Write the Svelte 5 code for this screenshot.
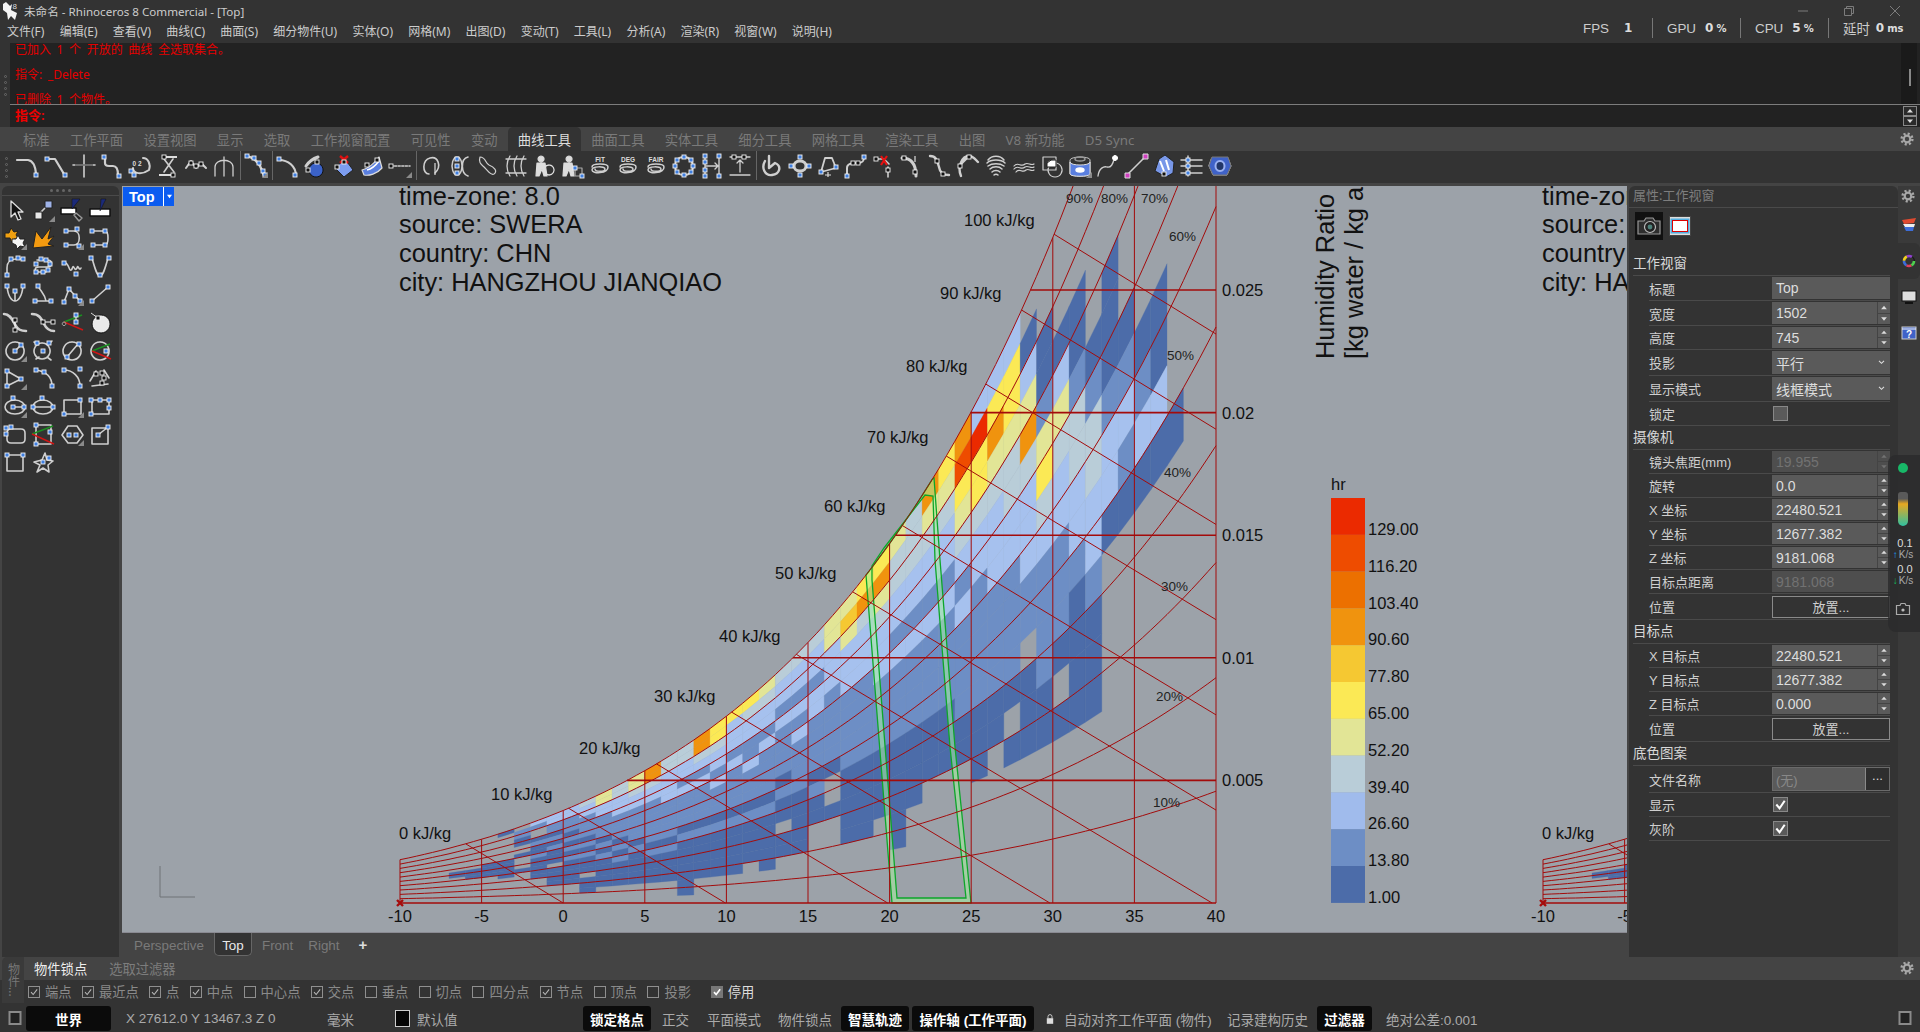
<script>
  const X = (T) => 400 + (T + 10) * 16.32;
  const Yw = (w) => 903 - w * 24520;
  const ps = (T) => 610.94 * Math.exp((17.625 * T) / (T + 243.04));
  const wOf = (T, rh) => { const p = rh * ps(T); return (0.622 * p) / (101325 - p); };
  const pt = (T, rh) => `${X(T).toFixed(1)},${Yw(wOf(T, rh)).toFixed(1)}`;

  const rhCurves = [];
  for (let r = 10; r <= 100; r += 10) {
    const p = [];
    for (let T = -10; T <= 40.01; T += 0.5) p.push(pt(T, r / 100));
    rhCurves.push(p.join(' '));
  }
  const tSatOfW = (w) => { let a = -20, b = 60; for (let i = 0; i < 40; i++) { const m = (a + b) / 2; if (wOf(m, 1) > w) b = m; else a = m; } return a; };
  const hAt = (T) => 1.006 * T + wOf(T, 1) * (2501 + 1.86 * T);
  const tSatOfH = (h) => { let a = -20, b = 60; for (let i = 0; i < 40; i++) { const m = (a + b) / 2; if (hAt(m) > h) b = m; else a = m; } return a; };

  const hLines = [];
  for (let h = 0; h <= 100; h += 10) {
    const Ts = tSatOfH(h);
    const T2 = Math.min(h / 1.006, 40);
    const w2 = T2 < 40 ? 0 : (h - 40.24) / (2501 + 74.4);
    hLines.push({ x1: X(Ts), y1: Yw(wOf(Ts, 1)), x2: X(T2), y2: Yw(w2) });
  }
  const wLines = [0.005, 0.01, 0.015, 0.02, 0.025].map((w) => ({ x1: X(tSatOfW(w)), y: Yw(w), label: String(w) }));
  const tLines = [];
  for (let T = -10; T <= 40; T += 5) tLines.push({ T, x: X(T), y: Yw(wOf(T, 1)) });

  const palette = { 0: '#4c6ca9', 1: '#6d8ec5', 2: '#a6c1ee', 3: '#b9cdd8', 4: '#e2e596', 5: '#fbe955', 6: '#f5c832', 7: '#f0930e', 8: '#ec7000', 9: '#ee4c00', a: '#eb2a00' };
  const heat = {
    '-7': '.........00', '-6': '.........000', '-5': '........0000', '-4': '0.......00000',
    '-3': '.1100..0...0', '-2': '21..0100100000', '-1': '22110101000.0000',
    0: '2211101010100000', 1: '32211110101000.000', 2: '44221111010100000', 3: '33222111101010000',
    4: '44322111110100000', 5: '77322111111010000', 6: '33222211111010000', 7: '3322121111010000000',
    8: '77321211110100000', 9: '55322121110100000', 10: '52221211110100000', 11: '5322112111010000',
    12: '43221211110100000', 13: '3221211110100.00', 14: '3221212111100000', 15: '32212211110100',
    16: '44222111110..0', 17: '4642221111100000', 18: '5732221111100000', 19: '574322211110000',
    20: '43322121111000000', 21: '333221211110000', 22: '74322121111000', 23: '54322121111000',
    24: '79543212111100', 25: '2a5532211111000', 26: '25743222111100', 27: '2554332211110.0',
    28: '.0247322211.000', 29: '..0014532111100', 30: '...0243221110.0', 31: '...001332210000',
    32: '.....0133221000', 33: '....0001220', 34: '......01210', 35: '.......0120', 36: '.......0020', 37: '..........0'
  };
  const cells = [];
  for (const key of Object.keys(heat)) {
    const T = Number(key);
    const s = heat[key];
    for (let k = 0; k < s.length; k++) {
      if (s[k] === '.') continue;
      const top = 1 - k * 0.05, bot = 1 - (k + 1) * 0.05;
      cells.push({ p: `${pt(T, top)} ${pt(T + 1, top)} ${pt(T + 1, bot)} ${pt(T, bot)}`, c: palette[s[k]] });
    }
  }
  const satPts = [];
  for (let T = 18.6; T <= 22.8; T += 0.4) satPts.push(`${X(T).toFixed(1)} ${Yw(wOf(T, 1)).toFixed(1)}`);
  const gOuter = `M892 903 L866 575 L${satPts.join(' L')} L934 478 L940 560 L955 747 L971 903 Z`;
  const gInner = 'M897 898 L872 580 L872 566 L884 548 L925 495 L933 496 L935 560 L950 747 L966 898 Z';

  const kj = [
    { t: '100 kJ/kg', x: 964, y: 220 }, { t: '90 kJ/kg', x: 940, y: 293 }, { t: '80 kJ/kg', x: 906, y: 366 },
    { t: '70 kJ/kg', x: 867, y: 437 }, { t: '60 kJ/kg', x: 824, y: 506 }, { t: '50 kJ/kg', x: 775, y: 573 },
    { t: '40 kJ/kg', x: 719, y: 636 }, { t: '30 kJ/kg', x: 654, y: 696 }, { t: '20 kJ/kg', x: 579, y: 748 },
    { t: '10 kJ/kg', x: 491, y: 794 }, { t: '0 kJ/kg', x: 399, y: 833 }
  ];
  const rhl = [
    { t: '90%', x: 1066, y: 198 }, { t: '80%', x: 1101, y: 198 }, { t: '70%', x: 1141, y: 198 }, { t: '60%', x: 1169, y: 236 },
    { t: '50%', x: 1167, y: 355 }, { t: '40%', x: 1164, y: 472 }, { t: '30%', x: 1161, y: 586 }, { t: '20%', x: 1156, y: 696 }, { t: '10%', x: 1153, y: 802 }
  ];
  const head = [
    { t: 'time-zone: 8.0', y: 205 }, { t: 'source: SWERA', y: 233 }, { t: 'country: CHN', y: 262 }, { t: 'city: HANGZHOU JIANQIAO', y: 291 }
  ];
  const legendColors = ['#eb2a00', '#ee4c00', '#ec7000', '#f0930e', '#f5c832', '#fbe955', '#e2e596', '#b9cdd8', '#a0bbec', '#6d8ec5', '#4c6ca9'];
  const legendVals = ['129.00', '116.20', '103.40', '90.60', '77.80', '65.00', '52.20', '39.40', '26.60', '13.80', '1.00'];

  const menus = ['文件(F)', '编辑(E)', '查看(V)', '曲线(C)', '曲面(S)', '细分物件(U)', '实体(O)', '网格(M)', '出图(D)', '变动(T)', '工具(L)', '分析(A)', '渲染(R)', '视窗(W)', '说明(H)'];
  const tabs = ['标准', '工作平面', '设置视图', '显示', '选取', '工作视窗配置', '可见性', '变动', '曲线工具', '曲面工具', '实体工具', '细分工具', '网格工具', '渲染工具', '出图', 'V8 新功能', 'D5 Sync'];

  const ic = (d, pts = [], o = {}) => ({ d, pts, ...o });
  const ln = (d, s = '#cfcfcf', w = 1.5, f = 'none') => ({ d, s, w, f });

  const leftIcons = [
    ic('', [], { more: [ln('M8 3V19L12 15L15 22L18 21L15 14L20 14Z', '#ddd', 1.3, '#111')] }),
    ic('M8 16L17 7', [], { fly: 1, more: [ln('M4 14h7v7H4z', '#222', 1, '#e8e8e8'), ln('M14 3h7v7h-7z', '#222', 1, '#9fb3e8')] }),
    ic('', [], { more: [ln('M1 10h15v6H1z', '#111', 1.5, '#fff'), ln('M12 11L20 1H12Z', '#111', .5, '#1b2a7a'), ln('M16 15L22 20L19 23L14 17Z', '#999', 1.5, '#222')] }),
    ic('', [], { more: [ln('M2 11h20v7H2z', '#111', 1.5, '#fff'), ln('M12 13L18 1H13Z', '#111', .5, '#1b2a7a')] }),
    ic('', [], { fly: 1, more: [ln('M2 7L6 7L8 2L11 6L15 5L13 9L16 13L11 13L9 17L7 12L2 12Z', '#222', 1, '#f0a010'), ln('M9 13L13 13L15 9L17 13L22 13L20 17L22 21L17 20L14 23L13 19L9 17Z', '#222', 1, '#f4f4f4')] }),
    ic('', [], { more: [ln('M2 22L5 5L11 13L20 1L17 13L23 10L17 18L23 20Z', '#222', 1, '#f39a10')] }),
    ic('M6 5H14C21 5 21 19 14 19H6', [[6, 5], [17, 3], [6, 19], [19, 20]], { fly: 1 }),
    ic('M6 5H17C21 5 21 19 17 19H6', [[4, 5], [17, 5], [5, 19], [17, 19]]),
    ic('M4 21V14C4 6 9 5 14 5H20', [[4, 21], [8, 5], [15, 4], [20, 5]]),
    ic('M6 6H16C22 6 22 13 16 13H8C3 13 3 18 8 18H15', [[5, 10], [5, 18], [10, 5], [15, 6], [19, 10], [12, 18], [17, 16]]),
    ic('M5 9C9 8 9 20 12 15C14 8 14 19 17 14C18 9 19 18 21 14', [[4, 9], [16, 20]]),
    ic('M4 4C7 15 9 22 12 22C15 22 17 15 20 4', [[3, 4], [21, 4], [12, 21]]),
    ic('M4 4C5 15 9 19 12 19C15 19 19 15 20 4 M12 8V19', [[4, 4], [20, 4], [12, 9]]),
    ic('M7 4C10 10 14 12 15 19H4H20', [[7, 4], [4, 19], [20, 19]]),
    ic('M4 20L9 7L20 19', [[4, 20], [9, 7], [15, 14], [20, 19]], { fly: 1 }),
    ic('M4 19L20 5', [[4, 19], [20, 5]]),
    ic('M1 4C8 4 10 12 13 16C15 20 18 21 23 21', [], { w: 2.6, blk: 1, pts: [[12, 10], [12, 20]], more: [ln('M12 10V20', '#fff', 1)] }),
    ic('M1 4C8 4 10 8 13 14C15 18 18 21 23 21', [], { w: 2.6, blk: 1, pts: [[12, 12], [22, 12]], more: [ln('M12 12H22', '#fff', 1)] }),
    ic('M3 12', [[16, 5], [16, 12]], { more: [ln('M4 12L22 5', '#1a9020', 1.6), ln('M4 12L23 20', '#d01515', 1.6), ln('M16 4V14', '#fff', 1), ln('M4 12a1.8 1.8 0 1 0 .1 0', '#aaa', 1)] }),
    ic('', [[3, 3]], { blk: 1, pts: [[10, 8]], more: [ln('M13 5a9 9 0 1 0 .1 0', '#111', 1, '#e9e9e9'), ln('M3 3L10 8', '#ddd', 1)] }),
    ic('M12 4a9 9 0 1 0 .1 0M12 13L18 7', [[12, 13], [18, 7]], { fly: 1 }),
    ic('M11 5a8 8 0 1 0 .1 0M3 4L7 7M21 3L17 7M5 21L8 19M20 22L16 19', [[12, 13], [6, 5], [18, 5]]),
    ic('M12 4a9 9 0 1 0 .1 0M7 19L18 6', [[7, 19], [19, 6]]),
    ic('M12 4a9 9 0 1 0 .1 0', [[18, 13]], { more: [ln('M4 13L22 6', '#1a9020', 1.5), ln('M4 13L23 21', '#d01515', 1.5)] }),
    ic('M4 5V20L18 13Z', [[4, 5], [18, 13], [4, 20]], { fly: 1 }),
    ic('M5 4C11 5 21 8 21 20', [[5, 4], [13, 6], [21, 20]]),
    ic('M4 4C13 4 20 11 20 20', [[4, 4], [20, 3], [20, 20]]),
    ic('M2 15L8 5M16 4L21 12M4 20L20 18', [], { blk: 1, pts: [[8, 8], [14, 7], [16, 12], [14, 17]] }),
    ic('M12 6C5 6 2 10 2 13C2 17 6 20 12 20C18 20 22 17 22 13C22 10 18 6 12 6ZM10 13H21', [[10, 4], [10, 13], [21, 13]], { fly: 1 }),
    ic('M12 6C5 6 2 10 2 13C2 17 6 20 12 20C18 20 22 17 22 13C22 10 18 6 12 6ZM2 13H22', [[11, 4], [2, 13], [22, 13]]),
    ic('M4 6H21V20H4Z', [[20, 6], [4, 20]], { fly: 1 }),
    ic('M4 6H21V20H4Z', [[3, 6], [12, 6], [21, 6], [3, 20], [21, 14]]),
    ic('M8 7H18Q22 7 22 11V17Q22 21 18 21H8Q4 21 4 17V11Q4 7 8 7Z', [[3, 6], [8, 5], [3, 12]]),
    ic('M5 3H20V22H5Z', [[5, 3], [19, 10], [5, 22]], { more: [ln('M1 12L22 4', '#1a9020', 1.4), ln('M1 12L23 22', '#d01515', 1.4)] }),
    ic('M8 4H17L23 13L17 21H8L2 13Z', [[9, 13], [16, 13]], { fly: 1 }),
    ic('M4 6H20V22H4ZM10 13L20 5', [[10, 13], [20, 5]]),
    ic('M4 5H20V21H4Z', [[4, 5], [20, 5]]),
    ic('M3 12L11 10L14 3L16 10L22 11L17 15L18 22L12 18L6 22L9 15Z', [[12, 12], [18, 8]])
  ];

  const topGroups = [
    [
      ic('M1 6H12Q19 7 20 20', [[20, 21]], { w: 2.2 }),
      ic('M2 5H11L20 20', [[3, 5], [21, 21]], { w: 2.2 }),
      ic('M1 11H23M12 1V23', [], { more: [ln('M3 11H21', '#333', 1, 'none')] }),
      ic('M5 3V9Q5 12 9 12H13Q18 12 18 21', [[4, 3], [19, 22]], { w: 2.2 }),
      ic('M5 14C5 20 14 21 21 16C23 10 20 4 15 4', [[3, 17], [6, 21]], { txt: '0 2', w: 2 }),
      ic('M8 5L18 18M17 5L8 18', [], { more: [ln('M9 3h12', '#ddd', 2), ln('M3 21h12', '#ddd', 2)], blk: 1, pts: [[8, 3], [17, 21]] }),
      ic('M2 14L7 7L12 14L17 9L22 14', [], { w: 2, blk: 1, pts: [[7, 9], [12, 12], [17, 10]] }),
      ic('M3 22V13C3 4 21 4 21 13V22M12 3V22', [], { w: 1.3 })
    ],
    [ic('M3 2C12 4 17 11 20 22', [[3, 2], [10, 4], [15, 9], [19, 17], [21, 21]], { w: 2.4, fly: 1 })],
    [
      ic('M3 6C12 6 20 12 20 22', [[3, 5], [19, 21]], { w: 2.2 }),
      ic('M2 12C6 6 11 4 14 3', [], { w: 3, blk: 1, pts: [[4, 16], [13, 8]], more: [ln('M12 9a7 7 0 1 0 .1 0', '#111', 1, '#3b62c8')] }),
      ic('', [], { more: [ln('M3 14L13 5L21 16L12 23Z', '#222', 1, '#7d9df0'), ln('M6 3H17', '#111', 0, 'none'), ln('M8 2L16 9M16 2L8 9', '#e01010', 2.4)], blk: 1, pts: [[5, 13], [12, 8]] }),
      ic('', [], { more: [ln('M2 16C9 14 14 10 19 3L22 14C17 20 9 22 4 21Z', '#ddd', 1.2, '#5a7fe0'), ln('M7 16C12 15 16 11 19 7', '#fff', 1.6)], blk: 1, pts: [[7, 11], [17, 6]] }),
      ic('M3 12H22', [[4, 12]], { dash: 1, fly: 1, blk: 1, pts: [[3, 12]] })
    ],
    [
      ic('M9 20C2 20 2 6 10 4C18 2 22 12 15 19', [[12, 8], [12, 18]], { more: [ln('M15 9V21', '#ddd', 1.2)], blk: 1, pts: [] }),
      ic('M20 3C12 5 13 20 20 22', [[9, 5], [9, 12], [9, 19]], { more: [ln('M9 3a5 9 0 1 0 .1 0', '#ccc', 1.5)] }),
      ic('M4 3C10 3 9 9 13 11C18 13 22 17 18 20C15 22 12 17 9 14C6 11 2 9 4 3Z', [], { w: 1.2 }),
      ic('M2 5H22M2 19H22M6 2C2 8 2 16 6 22M13 2C9 8 9 16 13 22M20 2C16 8 16 16 20 22', [], { w: 1.3 }),
      ic('', [], { txt2: 'man', more: [ln('M9 2a3 3 0 1 0 .1 0M5 9H13L15 22H12L10 15L7 22H4Z', '#ddd', 1.2, '#ddd'), ln('M17 11a5 5 0 1 0 .1 0', '#ddd', 1.3)] }),
      ic('', [], { more: [ln('M9 2a3 3 0 1 0 .1 0M4 9H12L14 22H11L9 15L6 22H3Z', '#ddd', 1.2, '#ddd'), ln('M15 14h7v8h-7z', '#aaa', 1.2)], pts: [[15, 14], [22, 22]] }),
      ic('M4 13C4 9 20 9 20 13C20 20 4 20 4 16C4 12 17 12 17 15C17 18 7 18 7 15', [], { label: 'FIT', w: 1.5 }),
      ic('M4 13C4 9 20 9 20 13C20 20 4 20 4 16C4 12 17 12 17 15C17 18 7 18 7 15', [], { label: 'DEG', w: 1.5 }),
      ic('M4 13C4 9 20 9 20 13C20 20 4 20 4 16C4 12 17 12 17 15C17 18 7 18 7 15', [], { label: 'FAIR', w: 1.5 }),
      ic('M12 3C18 3 21 8 21 12C21 18 17 21 12 21C6 21 3 17 3 12C3 7 6 3 12 3Z', [[12, 3], [19, 6], [21, 12], [19, 18], [12, 21], [5, 18], [3, 12], [5, 6]], { w: 2 }),
      ic('M5 2V22M19 2V22M5 12H18M15 9L18 12L15 15', [[5, 2], [5, 8], [5, 16], [5, 22], [19, 2], [19, 22]], { w: 1.4 }),
      ic('M2 3H22M12 6V18M9 9L12 6L15 9M2 21H22', [[6, 3], [16, 3]], { w: 1.3, blk: 1 })
    ],
    [
      ic('M5 7C1 14 5 22 12 21C20 20 22 12 15 9L9 14L9 2', [], { w: 2.4 }),
      ic('M12 7C20 7 20 17 12 17C4 17 4 7 12 7Z', [[12, 3], [21, 12], [12, 21], [3, 12]], { w: 3 }),
      ic('M5 18L9 4H16L20 14Z', [[5, 18], [20, 13]], { w: 1.8, more: [ln('M12 18V23M9 21H15', '#ddd', 1.2)] }),
      ic('M3 22V14C3 10 8 9 11 9H14C18 9 20 8 20 3', [[3, 22], [20, 3]], { w: 2, blk2: [[9, 9], [14, 9]] }),
      ic('M3 5H12L17 10M16 13V23', [], { blk: 1, pts: [[4, 5], [16, 16]], more: [ln('M9 2L15 11M15 2L9 11', '#e81010', 2.2)] }),
      ic('M2 4C10 4 16 8 16 22', [], { w: 3, blk: 1, pts: [[4, 4], [15, 18]], more: [ln('M15 2V8', '#ddd', 1.2)] }),
      ic('M2 2C8 2 9 6 11 13C12 19 15 21 21 21', [], { w: 2.4, blk: 1, pts: [[9, 7], [15, 20]] }),
      ic('M5 22C1 13 6 2 13 2C17 2 19 5 22 8M4 11L10 5', [], { w: 2.4, blk: 1, pts: [[4, 12], [13, 3]] }),
      ic('M4 6C8 1 16 1 20 6M3 9C7 5 17 5 21 9M4 12C8 9 16 9 20 12M6 15C9 12 15 12 18 15M8 18C10 16 14 16 16 18M10 21C11 20 13 20 14 21', [], { w: 1.5 }),
      ic('M2 12C6 7 9 14 13 10C16 8 19 12 22 10M2 15C6 10 9 17 13 13C16 11 19 15 22 13M4 18C8 13 10 20 14 16C17 14 19 18 22 16', [], { w: 1.2 }),
      ic('M3 3H16V16H3ZM15 9a7 7 0 1 0 .1 0', [], { w: 1.2, more: [ln('M7 9a9 9 0 0 1 9 -3V13H7Z', '#222', 1, '#fff')] }),
      ic('M2 6C2 2 22 2 22 6V20C22 23 2 23 2 20Z', [], { w: 1, fly: 1, more: [ln('M2 8C2 12 22 12 22 8V20C22 23 2 23 2 20Z', '#ddd', 1, '#5a7fe0'), ln('M8 16a4 2 0 1 0 8 0a4 2 0 1 0 -8 0', '#fff', 1.4, '#fff'), ln('M7 5a5 2 0 1 0 10 0a5 2 0 1 0 -10 0', '#999', 1.5)] }),
      ic('M2 22C3 14 8 12 11 13C15 14 17 10 18 5', [], { w: 1.3, more: [ln('M19 1.5a2.5 2.5 0 1 0 .1 0', '#fff', 1, '#fff')] }),
      ic('M3 21L21 3', [], { w: 1.6, more: [ln('M1 19h5v5H1zM19 0h5v5h-5z', '#ddd', 1, '#d040c0')] }),
      ic('', [], { more: [ln('M7 5L13 1L22 8L21 19L14 23L3 17Z', '#222', 1, '#7897e8'), ln('M8 7L12 17M14 6L17 16', '#fff', 2)], blk: 1, pts: [[12, 20]] }),
      ic('M1 6H22M1 12H22M1 19H22M8 2V22', [[8, 6], [8, 12], [8, 19]], { w: 1.5 }),
      ic('M4 4H20L23 12L19 21H5L1 12Z', [], { w: 1, more: [ln('M4 3H20L23 12L19 21H5L1 12Z', '#777', 1, '#3f62c8'), ln('M12 7C18 7 18 17 12 17C6 17 6 7 12 7Z', '#9ab0f0', 2, '#223668')] })
    ]
  ];

  const rows = [
    { t: 'sec', l: '工作视窗' },
    { t: 'text', l: '标题', v: 'Top', h: 25 },
    { t: 'spin', l: '宽度', v: '1502', h: 25 },
    { t: 'spin', l: '高度', v: '745' },
    { t: 'sel', l: '投影', v: '平行', h: 26 },
    { t: 'sel', l: '显示模式', v: '线框模式', h: 26 },
    { t: 'chk', l: '锁定', v: false },
    { t: 'sec', l: '摄像机' },
    { t: 'spin', l: '镜头焦距(mm)', v: '19.955', off: 1 },
    { t: 'spin', l: '旋转', v: '0.0' },
    { t: 'spin', l: 'X 坐标', v: '22480.521' },
    { t: 'spin', l: 'Y 坐标', v: '12677.382' },
    { t: 'spin', l: 'Z 坐标', v: '9181.068' },
    { t: 'text', l: '目标点距离', v: '9181.068', off: 1 },
    { t: 'btn', l: '位置', v: '放置...', h: 26 },
    { t: 'sec', l: '目标点' },
    { t: 'spin', l: 'X 目标点', v: '22480.521' },
    { t: 'spin', l: 'Y 目标点', v: '12677.382' },
    { t: 'spin', l: 'Z 目标点', v: '0.000' },
    { t: 'btn', l: '位置', v: '放置...', h: 26 },
    { t: 'sec', l: '底色图案' },
    { t: 'file', l: '文件名称', v: '(无)', h: 27 },
    { t: 'chk', l: '显示', v: true },
    { t: 'chk', l: '灰阶', v: true }
  ];

  const osnaps = [['端点', 1], ['最近点', 1], ['点', 1], ['中点', 1], ['中心点', 0], ['交点', 1], ['垂点', 0], ['切点', 0], ['四分点', 0], ['节点', 1], ['顶点', 0], ['投影', 0]];

  const status = [
    { x: 26, w: 85, t: '世界', p: 1 },
    { x: 126, t: 'X 27612.0 Y 13467.3 Z 0' },
    { x: 327, t: '毫米' },
    { x: 395, sw: 1 },
    { x: 417, t: '默认值' },
    { x: 583, w: 68, t: '锁定格点', p: 1 },
    { x: 662, t: '正交' },
    { x: 707, t: '平面模式' },
    { x: 778, t: '物件锁点' },
    { x: 841, w: 68, t: '智慧轨迹', p: 1 },
    { x: 912, w: 122, t: '操作轴 (工作平面)', p: 1 },
    { x: 1046, lock: 1 },
    { x: 1064, t: '自动对齐工作平面 (物件)' },
    { x: 1227, t: '记录建构历史' },
    { x: 1317, w: 55, t: '过滤器', p: 1 },
    { x: 1386, t: '绝对公差:0.001' },
    { x: 1880 }
  ];
</script>

{#snippet gear()}
  <svg class="gear" viewBox="0 0 14 14">
    <circle cx="7" cy="7" r="5.4" fill="none" stroke="#a8a8a8" stroke-width="2.4" stroke-dasharray="2.1 2.14" />
    <circle cx="7" cy="7" r="3.3" fill="none" stroke="#a8a8a8" stroke-width="2.2" />
  </svg>
{/snippet}

{#snippet icon(i)}
  <svg class="ic" viewBox="0 0 24 24">
    {#if i.d}
      <path d={i.d} fill="none" stroke="#cfcfcf" stroke-width={i.w || 1.6} stroke-linecap="round" stroke-linejoin="round" stroke-dasharray={i.dash ? '2 1.6' : null} />
    {/if}
    {#each i.more || [] as m}
      <path d={m.d} fill={m.f} stroke={m.s} stroke-width={m.w} stroke-linejoin="round" />
    {/each}
    {#if i.label}<text class="ictxt" x="12" y="7.5">{i.label}</text>{/if}
    {#if i.txt}<text class="ictxt" x="9" y="12">{i.txt}</text>{/if}
    {#each i.pts as p}
      <rect x={p[0] - 2} y={p[1] - 2} width="4" height="4" fill={i.blk ? '#111' : '#3f7fe0'} stroke="#f2f2f2" stroke-width="0.9" />
    {/each}
    {#each i.blk2 || [] as p}
      <rect x={p[0] - 2} y={p[1] - 2} width="4" height="4" fill="#111" stroke="#f2f2f2" stroke-width="0.9" />
    {/each}
    {#if i.fly}<path d="M24 18V24H18Z" fill="#8a8a8a" />{/if}
  </svg>
{/snippet}

{#snippet check(on, strong)}
  <span class="cb" class:strong>
    {#if on}<svg viewBox="0 0 12 12"><path d="M2.4 6.2L5 9L9.8 2.8" fill="none" stroke={strong ? '#fff' : '#b8b8b8'} stroke-width={strong ? 2 : 1.3} /></svg>{/if}
  </span>
{/snippet}

<div class="app">
  <header class="top">
    <div class="title">
      <svg class="logo" viewBox="0 0 18 20">
        <path d="M1 3L4 1L8 5L10 3L9 9L15 12L13 19L9 15L6 19L5 12L1 9Z" fill="#f4f4f4" />
        <text x="10.5" y="8" class="logo8">8</text>
      </svg>
      <span>未命名 - Rhinoceros 8 Commercial - [Top]</span>
    </div>
    <nav class="menu">
      {#each menus as m}<span>{m}</span>{/each}
    </nav>
    <div class="stats">
      <div class="winbtns">
        <svg viewBox="0 0 10 10"><path d="M0 5H10" stroke="#7c7c7c" fill="none" /></svg>
        <svg viewBox="0 0 10 10"><path d="M0.5 2.5H7.5V9.5H0.5ZM2.5 2.5V0.5H9.5V7.5H7.5" stroke="#7c7c7c" fill="none" /></svg>
        <svg viewBox="0 0 10 10"><path d="M0 0L10 10M10 0L0 10" stroke="#7c7c7c" fill="none" /></svg>
      </div>
      <div class="nums">
        <span class="st w-fps">FPS<b>1</b></span>
        <span class="st">GPU<b>0<small>%</small></b></span>
        <span class="st">CPU<b>5<small>%</small></b></span>
        <span class="st last">延时<b>0<small>ms</small></b></span>
      </div>
    </div>
  </header>

  <section class="cmd">
    <div class="grip"><i></i><i></i><i></i><i></i></div>
    <div class="cmdbody">
      <div class="hist">
        <p>已加入 1 个 开放的 曲线 全选取集合。</p>
        <p>指令: _Delete</p>
        <p>已删除 1 个物件。</p>
        <div class="sbar"><i></i></div>
      </div>
      <div class="prompt">
        <span>指令:</span>
        <div class="arrows">
          <svg viewBox="0 0 14 10"><rect x=".5" y=".5" width="13" height="9" fill="#2a2a2a" stroke="#888" /><path d="M4 6.5L7 3L10 6.5Z" fill="#ddd" /></svg>
          <svg viewBox="0 0 14 10"><rect x=".5" y=".5" width="13" height="9" fill="#2a2a2a" stroke="#888" /><path d="M4 3.5L7 7L10 3.5Z" fill="#ddd" /></svg>
        </div>
      </div>
    </div>
  </section>

  <div class="tabbar">
    {#each tabs as t}<span class:act={t === '曲线工具'}>{t}</span>{/each}
    <div class="tabgear">{@render gear()}</div>
  </div>

  <div class="iconbar">
    <div class="grip small"><i></i><i></i><i></i><i></i></div>
    {#each topGroups as g, gi}
      {#if gi > 0}<span class="sep"></span>{/if}
      {#each g as i}<span class="cell">{@render icon(i)}</span>{/each}
    {/each}
  </div>

  <main class="main">
    <aside class="left">
      <div class="lefthead"><i></i><i></i><i></i><i></i></div>
      <div class="leftgrid">
        {#each leftIcons as i}<span class="lcell">{@render icon(i)}</span>{/each}
      </div>
    </aside>

    <div class="center">
      <div class="vp">
        <svg class="chart" viewBox="122 186 1505 747">
          {#each [0, 1143] as dx}
            <g transform="translate({dx} 0)">
              {#each head as h}<text class="h1" x="399" y={h.y}>{h.t}</text>{/each}
              {#each cells as c}<polygon points={c.p} fill={c.c} stroke={c.c} stroke-width="0.3" />{/each}
              <path d={gOuter + ' ' + gInner} fill="#a8f0a0" fill-opacity="0.55" fill-rule="evenodd" />
              <path d={gOuter} fill="none" stroke="#0da62a" stroke-width="1.3" />
              <path d={gInner} fill="none" stroke="#0da62a" stroke-width="1.3" />
              {#each rhCurves as c}<polyline points={c} class="red" />{/each}
              {#each hLines as l}<line x1={l.x1} y1={l.y1} x2={l.x2} y2={l.y2} class="red" />{/each}
              {#each wLines as l}
                <line x1={l.x1} y1={l.y} x2="1216" y2={l.y} class="red thick" />
                <text class="ax" x="1222" y={l.y + 6}>{l.label}</text>
              {/each}
              {#each tLines as l}
                <line x1={l.x} y1="903" x2={l.x} y2={l.y} class="red" />
                <text class="ax mid" x={l.x} y="922">{l.T}</text>
              {/each}
              <line x1="400" y1="903" x2="1216" y2="903" class="red thick" />
              {#each kj as k}<text class="ax" x={k.x} y={k.y + 6}>{k.t}</text>{/each}
              {#each rhl as r}<text class="pc" x={r.x} y={r.y + 5}>{r.t}</text>{/each}
              <path d="M397 900L403 906M403 900L397 906" stroke="#a50c0c" stroke-width="2.4" />
              <text class="h1" transform="translate(1334 359) rotate(-90)">Humidity Ratio</text>
              <text class="h1" transform="translate(1363 359) rotate(-90)">[kg water / kg air]</text>
              <text class="ax" x="1331" y="490">hr</text>
              {#each legendColors as c, n}
                <rect x="1331" y={498 + n * 36.8} width="34" height="36.9" fill={c} />
                <text class="ax" x="1368" y={535 + n * 36.8}>{legendVals[n]}</text>
              {/each}
            </g>
          {/each}
          <path d="M160 866V897H195" fill="none" stroke="#6e7276" stroke-width="1" />
        </svg>
        <div class="vptag"><span>Top</span><em><svg viewBox="0 0 8 6"><path d="M1 1H7L4 5Z" fill="#fff" /></svg></em></div>
      </div>
      <div class="vptabs">
        <span>Perspective</span><span class="on">Top</span><span>Front</span><span>Right</span><b>+</b>
      </div>
    </div>

    <aside class="props">
      <div class="phead">
        <span>属性:工作视窗</span>
      </div>
      <div class="pwrap">
        <div class="pbody">
          <div class="picons">
            <span class="cam">
              <svg viewBox="0 0 28 28">
                <path d="M3 9H9L11 6H18L20 9H25V22H3Z" fill="#2e2e2e" stroke="#999" stroke-width="1.2" />
                <circle cx="15" cy="15" r="5.5" fill="#222" stroke="#bbb" stroke-width="1.2" />
                <circle cx="15" cy="15" r="2.4" fill="#4c7f78" />
              </svg>
            </span>
            <span class="rectbtn"><i></i></span>
          </div>
          {#each rows as r}
            {#if r.t === 'sec'}
              <div class="sec">{r.l}</div>
            {:else}
              <div class="row h{r.h || 24}">
                <span class="lab">{r.l}</span>
                {#if r.t === 'text'}
                  <div class="fld" class:off={r.off}><span>{r.v}</span></div>
                {:else if r.t === 'spin'}
                  <div class="fld" class:off={r.off}><span>{r.v}</span>
                    <div class="spin">
                      <svg viewBox="0 0 12 11"><path d="M3 7.5L6 4L9 7.5Z" /></svg>
                      <svg viewBox="0 0 12 11"><path d="M3 3.5L6 7L9 3.5Z" /></svg>
                    </div>
                  </div>
                {:else if r.t === 'sel'}
                  <div class="fld"><span>{r.v}</span>
                    <svg class="chev" viewBox="0 0 8 6"><path d="M1 1L4 4L7 1" fill="none" stroke="#ddd" stroke-width="1.3" /></svg>
                  </div>
                {:else if r.t === 'chk'}
                  <div class="chkwrap"><span class="pcb">{#if r.v}<svg viewBox="0 0 14 14"><path d="M2.5 7L6 11L11.5 3" fill="none" stroke="#fff" stroke-width="2.2" /></svg>{/if}</span></div>
                {:else if r.t === 'btn'}
                  <div class="btn">{r.v}</div>
                {:else if r.t === 'file'}
                  <div class="filef"><span>{r.v}</span><em>...</em></div>
                {/if}
              </div>
            {/if}
          {/each}
        </div>
      </div>
    </aside>

    <div class="strip">
      <div class="stripgear">{@render gear()}</div>
      <div class="stab">
        <svg viewBox="0 0 16 16"><path d="M1 3L15 1L13 6L3 7Z" fill="#e04a30" /><path d="M2 7L14 7L13 10L4 10Z" fill="#eee" /><path d="M3 10L13 10L12 14L5 14Z" fill="#3d6dd8" /></svg>
      </div>
      <div class="stab act">
        <svg viewBox="0 0 16 16"><circle cx="8" cy="8" r="5.4" fill="none" stroke="#111" stroke-width="1" /><circle cx="8" cy="8" r="5" fill="none" stroke="#4fd04f" stroke-width="2.6" stroke-dasharray="5.2 26" /><circle cx="8" cy="8" r="5" fill="none" stroke="#e04060" stroke-width="2.6" stroke-dasharray="0 5.2 5.2 26" /><circle cx="8" cy="8" r="5" fill="none" stroke="#3d6dd8" stroke-width="2.6" stroke-dasharray="0 10.4 5.2 26" /><circle cx="8" cy="8" r="5" fill="none" stroke="#f0d020" stroke-width="2.6" stroke-dasharray="0 15.6 5.2 26" /><circle cx="8" cy="8" r="5" fill="none" stroke="#9040d0" stroke-width="2.6" stroke-dasharray="0 20.8 5.2 26" /></svg>
      </div>
      <div class="stab">
        <svg viewBox="0 0 16 16"><rect x="1" y="2" width="14" height="10" fill="#ddd" stroke="#111" /><path d="M4 14H12" stroke="#111" stroke-width="2" /></svg>
      </div>
      <div class="stab">
        <svg viewBox="0 0 16 16"><rect x="1" y="2" width="14" height="12" fill="#3f62c8" stroke="#ccc" /><path d="M1 4H15" stroke="#fff" /><text x="8" y="12.5" class="q">?</text></svg>
      </div>
    </div>

    <div class="hud">
      <i class="dot"></i>
      <i class="gauge"></i>
      <div class="sp">0.1</div>
      <div class="ks"><em class="blue">↑</em>K/s</div>
      <div class="sp">0.0</div>
      <div class="ks"><em class="green">↓</em>K/s</div>
      <svg viewBox="0 0 16 14"><path d="M1.5 3.5H5L6 1.5H10L11 3.5H14.5V12.5H1.5Z" fill="none" stroke="#aaa" stroke-width="1.2" /><circle cx="8" cy="8" r="1.6" fill="#bbb" /></svg>
    </div>
  </main>

  <div class="sn-tabs">
    <div class="vtab">物件...</div>
    <span class="on">物件锁点</span><span>选取过滤器</span>
    <div class="sngear">{@render gear()}</div>
  </div>
  <div class="sn-row">
    {#each osnaps as o}
      <span class="sn">{@render check(o[1], false)}{o[0]}</span>
    {/each}
    <span class="sn stop">{@render check(true, true)}停用</span>
  </div>
  <footer class="status">
    <svg class="sqi" viewBox="0 0 14 14"><rect x="1.5" y="1" width="11" height="12" fill="#222" stroke="#8a8a8a" stroke-width="2" /></svg>
    {#each status.slice(0, -1) as s, n}
      <div class="scell" style="width:{status[n + 1].x - s.x}px">
        {#if s.p}<span class="pill" style="width:{s.w}px">{s.t}</span>
        {:else if s.sw}<span class="swatch"></span>
        {:else if s.lock}<svg class="lk" viewBox="0 0 10 14"><path d="M2.5 6V4a2.5 2.5 0 0 1 5 0V6" fill="none" stroke="#ccc" stroke-width="1.2" /><rect x="1" y="6" width="8" height="7" fill="#ddd" /></svg>
        {:else}{s.t}{/if}
      </div>
    {/each}
    <svg class="sqi end" viewBox="0 0 14 14"><rect x="1.5" y="1" width="11" height="12" fill="#222" stroke="#8a8a8a" stroke-width="2" /></svg>
  </footer>
</div>

<style>
  :global(body) { margin: 0; background: #333; }
  .app { width: 1920px; height: 1032px; display: flex; flex-direction: column; overflow: hidden; background: #444; position: relative; font-family: "Noto Sans", "Noto Sans CJK SC", sans-serif; font-size: 12px; color: #ccc; }
  .top { height: 43px; background: #333; position: relative; flex: none; }
  .title { height: 22px; display: flex; align-items: center; gap: 4px; padding-left: 2px; font-size: 11.6px; }
  .logo { width: 18px; height: 20px; }
  .logo8 { font: 8px "Liberation Sans", sans-serif; fill: #ddd; }
  .menu { display: flex; gap: 15.2px; padding-left: 7px; height: 18px; align-items: center; }
  .stats { position: absolute; right: 0; top: 0; width: 340px; height: 43px; }
  .winbtns { position: absolute; top: 6px; left: 218px; display: flex; gap: 36px; }
  .winbtns svg { width: 10px; height: 10px; }
  .nums { position: absolute; top: 18px; left: 3px; height: 20px; display: flex; font-size: 13.4px; color: #ccc; }
  .st { display: flex; align-items: center; gap: 9px; width: 88px; padding-left: 14px; box-sizing: border-box; border-right: 1px solid #777; height: 20px; white-space: nowrap; font-family: "Liberation Sans", "Noto Sans CJK SC", sans-serif; }
  .st.last { border: none; gap: 6px; width: 78px; }
  .st.w-fps { width: 70px; padding-left: 0; gap: 15px; }
  .st b { font-family: "DejaVu Sans", sans-serif; font-size: 12px; color: #ddd; }
  .st small { font-size: 10px; margin-left: 3px; }

  .cmd { height: 84px; flex: none; display: flex; background: #333; }
  .grip { width: 10px; flex: none; display: flex; flex-direction: column; align-items: center; justify-content: center; gap: 3px; }
  .grip i { width: 3px; height: 3px; border: 1px solid #6a6a6a; border-radius: 50%; box-sizing: border-box; }
  .cmdbody { flex: 1; background: #222; display: flex; flex-direction: column; }
  .hist { height: 61px; border-bottom: 1px solid #7d7d7d; position: relative; overflow: hidden; padding-left: 5px; color: #e40000; }
  .hist p { margin: 0; height: 25px; line-height: 25px; font-size: 12px; word-spacing: 2.5px; position: relative; top: -6px; }
  .sbar { position: absolute; right: 3px; top: 0; bottom: 0; width: 16px; background: #1a1a1a; }
  .sbar i { position: absolute; left: 8px; top: 26px; width: 2px; height: 17px; background: #888; }
  .prompt { flex: 1; display: flex; justify-content: space-between; padding: 0 3px 0 5px; align-items: center; color: #ee0000; font-size: 13px; font-weight: 600; }
  .prompt span { position: relative; top: -2px; }
  .arrows { display: flex; flex-direction: column; width: 14px; }
  .arrows svg { width: 14px; height: 10px; display: block; }

  .tabbar { height: 24px; flex: none; background: #444; display: flex; align-items: flex-end; gap: 20.3px; padding-left: 23px; color: #7a7a7a; font-size: 13.3px; position: relative; }
  .tabbar span { height: 24px; line-height: 26px; }
  .tabbar span.act { background: #333; color: #ddd; padding: 0 10px; margin: 0 -10px; border-radius: 5px 5px 0 0; }
  .tabgear { position: absolute; right: 6px; top: 5px; }
  .gear { width: 14px; height: 14px; display: block; }

  .iconbar { height: 32px; flex: none; background: #333; display: flex; align-items: center; position: relative; padding: 0 0 3px 14px; box-sizing: border-box; }
  .grip.small { position: absolute; left: 1px; top: 2px; width: 10px; height: 28px; }
  .cell { width: 28px; height: 29px; display: flex; align-items: center; justify-content: center; flex: none; }
  .ic { width: 24px; height: 24px; display: block; overflow: visible; }
  .ictxt { font: bold 6.5px "Liberation Sans Narrow", "Liberation Sans", sans-serif; fill: #ddd; text-anchor: middle; }
  .sep { width: 1px; height: 29px; background: #666; margin: 0 1px 0 2px; flex: none; }

  .main { flex: 1; min-height: 0; display: flex; padding-top: 3px; background: #444; position: relative; }
  .left { width: 117px; margin: 0 3px 0 2px; flex: none; background: #333; border-radius: 6px 6px 0 0; }
  .lefthead { height: 9px; border-bottom: 1px solid #4a4a4a; display: flex; justify-content: center; gap: 3px; align-items: center; }
  .lefthead i { width: 3px; height: 3px; background: #666; border-radius: 50%; }
  .leftgrid { display: grid; grid-template-columns: repeat(4, 28.3px); grid-auto-rows: 28px; justify-items: center; align-items: center; margin-left: -1px; }
  .lcell { width: 24px; height: 24px; display: block; }

  .center { width: 1505px; flex: none; display: flex; flex-direction: column; }
  .vp { height: 747px; background: #9ca2a9; position: relative; overflow: hidden; flex: none; border-bottom: 1px solid #8a8a92; box-sizing: border-box; }
  .chart { width: 1505px; height: 747px; display: block; }
  .h1 { font: 25.4px "Liberation Sans", sans-serif; fill: #111; }
  .ax { font: 16.5px "Liberation Sans", sans-serif; fill: #111; }
  .ax.mid { text-anchor: middle; }
  .pc { font: 13.5px "Liberation Sans", sans-serif; fill: #222; }
  .red { fill: none; stroke: #a30b0b; stroke-width: 1; }
  .red.thick { stroke-width: 1.6; }
  .vptag { position: absolute; left: 1px; top: 1px; width: 51px; height: 19px; display: flex; background: #0b5cf0; color: #fff; font-family: "Liberation Sans", sans-serif; font-size: 14.5px; font-weight: 700; align-items: center; }
  .vptag span { flex: 1; padding-left: 6px; }
  .vptag em { width: 11px; height: 19px; border-left: 1px solid #fff; display: flex; align-items: center; justify-content: center; box-sizing: border-box; }
  .vptag svg { width: 7px; height: 5px; }

  .vptabs { flex: 1; display: flex; align-items: flex-start; color: #7a7a7a; font-size: 13.4px; gap: 10px; padding-left: 12px; font-family: "Liberation Sans", sans-serif; }
  .vptabs span { height: 23px; line-height: 25px; }
  .vptabs span.on { width: 38px; text-align: center; background: #333; color: #e8e8e8; border: 1px solid #666; border-top: none; border-radius: 0 0 5px 5px; box-sizing: border-box; }
  .vptabs span:nth-child(4) { margin-left: 5px; }
  .vptabs b { color: #ddd; font-size: 15px; line-height: 24px; margin-left: 9px; }

  .props { width: 269px; flex: none; margin-left: 2px; background: #333; border-radius: 6px 6px 0 0; display: flex; flex-direction: column; }
  .phead { height: 21px; border-bottom: 1px solid #4a4a4a; padding-left: 4px; line-height: 19px; color: #7e7e7e; font-size: 13px; flex: none; }
  .pbody { padding-bottom: 10px; }
  .picons { height: 44px; display: flex; align-items: flex-start; gap: 6px; padding: 4px 0 0 6px; box-sizing: border-box; }
  .cam { width: 28px; height: 28px; background: #111; display: block; }
  .cam svg { width: 28px; height: 28px; display: block; }
  .rectbtn { width: 22px; height: 20px; margin-top: 4px; background: #ddd; border: 1px solid #444; display: flex; align-items: center; justify-content: center; box-sizing: border-box; }
  .rectbtn i { width: 14px; height: 10px; background: #fff; border: 1px solid #d00; box-shadow: 0 0 0 1.5px #50aee0; }
  .sec { height: 24px; margin-left: 4px; width: 257px; box-sizing: border-box; border-bottom: 1px solid #4a4a4a; font-size: 13.5px; line-height: 22px; color: #d8d8d8; }
  .row { margin-left: 20px; width: 241px; display: flex; box-sizing: border-box; border-bottom: 1px solid #4a4a4a; align-items: center; font-size: 13px; color: #cfcfcf; font-family: "Liberation Sans", "Noto Sans CJK SC", sans-serif; }
  .h24 { height: 24px; }
  .h25 { height: 25px; }
  .h26 { height: 26px; }
  .h27 { height: 27px; }
  .lab { width: 123px; flex: none; white-space: nowrap; }
  .fld { flex: 1; height: calc(100% - 2px); background: #5a5a5a; position: relative; display: flex; align-items: center; padding-left: 4px; font-size: 14px; color: #ddd; }
  .fld.off { background: #4e4e4e; color: #727272; }
  .spin { position: absolute; right: 0; top: 0; bottom: 0; width: 12px; border-left: 1px solid #444; display: flex; flex-direction: column; }
  .spin svg { flex: 1; min-height: 0; width: 12px; fill: #ddd; display: block; }
  .spin svg + svg { border-top: 1px solid #444; }
  .off .spin svg { fill: #727272; }
  .chev { position: absolute; right: 5px; top: 50%; margin-top: -3px; width: 7px; height: 5px; }
  .chkwrap { flex: 1; padding-left: 1px; display: flex; align-items: center; }
  .pcb { width: 13px; height: 13px; background: #5a5a5a; border: 1px solid #888; display: block; box-sizing: content-box; }
  .pcb svg { width: 13px; height: 13px; display: block; }
  .btn { flex: 1; height: calc(100% - 3px); border: 1px solid #8a8a8a; box-sizing: border-box; text-align: center; display: flex; align-items: center; justify-content: center; color: #cfcfcf; }
  .filef { flex: 1; height: calc(100% - 2px); display: flex; border: 1px solid #6a6a6a; box-sizing: border-box; }
  .filef span { flex: 1; background: #5a5a5a; color: #888; padding-left: 3px; display: flex; align-items: center; }
  .filef em { width: 23px; text-align: center; font-style: normal; background: #2e2e2e; border-left: 1px solid #8a8a8a; color: #ddd; }

  .strip { flex: 1; display: flex; flex-direction: column; position: relative; background: #3a3a3a; align-items: stretch; }
  .stripgear { height: 21px; padding: 3px 0 0 3px; box-sizing: border-box; }
  .stab { height: 36px; display: flex; align-items: center; justify-content: center; background: #3a3a3a; flex: none; }
  .stab svg { width: 16px; height: 16px; }
  .stab.act { background: #333; border-radius: 0 6px 6px 0; }
  .q { font: bold 10px "Liberation Sans", sans-serif; fill: #fff; text-anchor: middle; }

  .hud { position: absolute; right: 0; top: 272px; width: 32px; height: 177px; background: rgba(42, 42, 44, .8); border-radius: 8px 0 0 8px; display: flex; flex-direction: column; align-items: center; font-family: "Liberation Sans", sans-serif; color: #ddd; }
  .hud .dot { width: 10px; height: 10px; border-radius: 50%; background: #18b868; margin: 8px 2px 0 0; flex: none; }
  .hud .gauge { width: 10px; height: 34px; border-radius: 3px 3px 5px 5px; margin: 19px 2px 11px 0; flex: none; background: linear-gradient(#5a5a5a 20%, #e8a820 35%, #30c0a0); }
  .hud .sp { font-size: 11px; line-height: 12px; margin-left: 2px; }
  .hud .ks { font-size: 10px; line-height: 12px; color: #aaa; margin-bottom: 2px; display: flex; margin-left: -2px; }
  .hud em { font-style: normal; font-weight: 700; margin-right: 1px; }
  .hud .blue { color: #1ea0ff; }
  .hud .green { color: #10c060; }
  .hud svg { width: 16px; height: 14px; margin: 13px 2px 0 0; }

  .sn-tabs { height: 23px; flex: none; background: #444; display: flex; align-items: center; gap: 22px; position: relative; padding-left: 34px; color: #7d7d7d; font-size: 13.3px; }
  .sn-tabs span.on { color: #eee; }
  .vtab { position: absolute; left: 2px; top: 0; width: 22px; height: 46px; background: #3a3a3a; writing-mode: vertical-rl; display: flex; align-items: center; justify-content: center; color: #777; font-size: 12px; border-radius: 5px 0 0 0; white-space: nowrap; }
  .sngear { position: absolute; right: 6px; top: 4px; }
  .sn-row { height: 23px; flex: none; background: #333; display: flex; align-items: center; gap: 10.3px; padding-left: 28px; color: #8a8a8a; font-size: 13.3px; }
  .sn { display: flex; align-items: center; gap: 5px; }
  .stop { color: #ddd; margin-left: 9.5px; }
  .cb { width: 12px; height: 12px; border: 1px solid #8f8f8f; box-sizing: border-box; display: block; }
  .cb.strong { background: #777; border-color: #777; }
  .cb svg { width: 10px; height: 10px; display: block; }

  .status { height: 29px; flex: none; background: #333; display: flex; align-items: center; font-size: 13.5px; color: #aaa; padding-left: 8px; position: relative; font-family: "Liberation Sans", "Noto Sans CJK SC", sans-serif; white-space: nowrap; }
  .sqi { width: 14px; height: 14px; margin-right: 4px; flex: none; }
  .sqi.end { position: absolute; right: 8px; top: 8px; margin: 0; }
  .scell { flex: none; display: flex; align-items: center; height: 25px; position: relative; top: 1px; }
  .pill { background: #0b0b0b; color: #fff; font-weight: 700; height: 25px; border-radius: 3px; display: flex; align-items: center; justify-content: center; }
  .swatch { width: 15px; height: 17px; background: #050505; border: 1px solid #ccc; box-sizing: border-box; }
  .lk { width: 8px; height: 12px; }
</style>
